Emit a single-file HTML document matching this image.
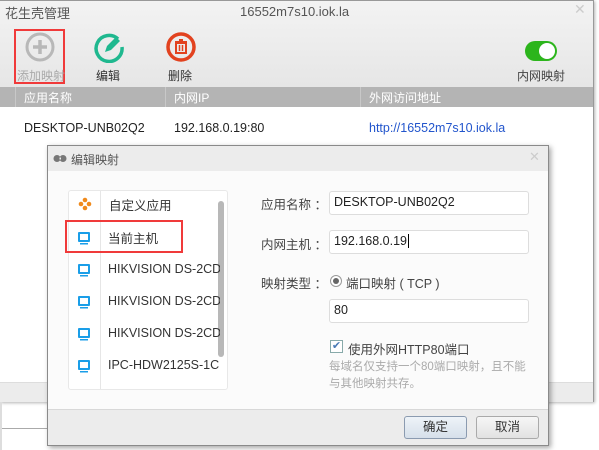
<!DOCTYPE html>
<html><head><meta charset="utf-8"><style>
*{margin:0;padding:0;box-sizing:border-box}
body{width:599px;height:450px;position:relative;overflow:hidden;background:#fff;font-family:"Liberation Sans","Noto Sans CJK SC",sans-serif;font-size:12px;color:#333}
.abs{position:absolute}
</style></head><body>
<div class="abs" style="left:0;top:0;width:594px;height:402px;background:#fff;border-right:1px solid #999;border-bottom:1px solid #999;box-shadow:1px 1px 3px rgba(0,0,0,.3)">
  <div class="abs" style="left:0;top:0;width:593px;height:87px;background:linear-gradient(#f3f3f3,#e6e6e6)"></div>
  <div class="abs" style="left:0;top:0;width:593px;height:1px;background:#999"></div>
  <div class="abs" style="left:5px;top:3px;font-size:13px;color:#555">花生壳管理</div>
  <div class="abs" style="left:240px;top:4px;font-size:13px;color:#555">16552m7s10.iok.la</div>
  <div class="abs" style="left:574px;top:1px;font-size:14px;color:#ccc">✕</div>
  <div class="abs" style="left:14px;top:29px;width:51px;height:55px;border:2px solid #f03a3a"></div>
  <svg class="abs" style="left:24px;top:31px" width="32" height="32"><circle cx="16" cy="16" r="13" fill="none" stroke="#b8b8b8" stroke-width="3"/><path d="M16 9v14M9 16h14" stroke="#b8b8b8" stroke-width="3.5"/></svg>
  <div class="abs" style="left:17px;top:67px;color:#aaa">添加映射</div>
  <svg class="abs" style="left:93px;top:31px" width="32" height="32"><path d="M25 8A13 13 0 1 0 29 16" fill="none" stroke="#1fb88f" stroke-width="3.5"/><path d="M12 21l2-6 9-9 4 4-9 9z" fill="#1fb88f"/></svg>
  <div class="abs" style="left:96px;top:67px;color:#333">编辑</div>
  <svg class="abs" style="left:165px;top:31px" width="32" height="32"><circle cx="16" cy="16" r="13" fill="none" stroke="#e2421f" stroke-width="3.5"/><path d="M10 11h12M14 9h4M11 12h10v10h-10z" fill="none" stroke="#e2421f" stroke-width="2"/><path d="M14.5 14v6M17.5 14v6" stroke="#e2421f" stroke-width="1.5"/></svg>
  <div class="abs" style="left:168px;top:67px;color:#333">删除</div>
  <div class="abs" style="left:525px;top:41px;width:32px;height:20px;border-radius:10px;background:#2cb51c"></div>
  <div class="abs" style="left:539px;top:43px;width:16px;height:16px;border-radius:50%;background:#fff"></div>
  <div class="abs" style="left:517px;top:67px;color:#444">内网映射</div>
  <div class="abs" style="left:0;top:87px;width:593px;height:20px;background:#b4b4b4"></div>
  <div class="abs" style="left:15px;top:87px;width:1px;height:20px;background:#c8c8c8"></div>
  <div class="abs" style="left:165px;top:87px;width:1px;height:20px;background:#c8c8c8"></div>
  <div class="abs" style="left:360px;top:87px;width:1px;height:20px;background:#c8c8c8"></div>
  <div class="abs" style="left:24px;top:89px;color:#fff">应用名称</div>
  <div class="abs" style="left:174px;top:89px;color:#fff">内网IP</div>
  <div class="abs" style="left:369px;top:89px;color:#fff">外网访问地址</div>
  <div class="abs" style="left:24px;top:121px;font-size:12.5px;color:#222">DESKTOP-UNB02Q2</div>
  <div class="abs" style="left:174px;top:121px;font-size:12.5px;color:#222">192.168.0.19:80</div>
  <div class="abs" style="left:369px;top:121px;font-size:12.5px;color:#2255cc">http://16552m7s10.iok.la</div>
  <div class="abs" style="left:0;top:382px;width:593px;height:20px;background:#ececec;border-top:1px solid #ddd"></div>
</div>
<div class="abs" style="left:0;top:428px;width:47px;height:1px;background:#aaa"></div>
<div class="abs" style="left:0;top:402px;width:2px;height:48px;background:#ddd"></div>
<div class="abs" style="left:47px;top:145px;width:502px;height:301px;background:#fbfbfb;border:1px solid #8a8a8a;box-shadow:2px 2px 5px rgba(0,0,0,.35)">
  <div class="abs" style="left:0;top:0;width:500px;height:25px;background:#ececec"></div>
  <svg class="abs" style="left:5px;top:8px" width="14" height="9"><circle cx="4" cy="4.5" r="3.5" fill="#777"/><circle cx="10" cy="4.5" r="3.5" fill="#777"/><rect x="6.5" y="3.5" width="1.5" height="2" fill="#eee"/></svg>
  <div class="abs" style="left:23px;top:5px;color:#555">编辑映射</div>
  <div class="abs" style="left:481px;top:3px;font-size:13px;color:#ccc">✕</div>
  <div class="abs" style="left:20px;top:44px;width:160px;height:200px;background:#fff;border:1px solid #e8e8e8;border-radius:3px;overflow:hidden">
    <div class="abs" style="left:31px;top:0;width:1px;height:200px;background:#e6e6e6"></div>
    <div class="abs" style="left:149px;top:10px;width:6px;height:156px;border-radius:3px;background:#b8b8b8"></div>
    <svg class="abs" style="left:9px;top:6px" width="14" height="14"><circle cx="7" cy="3" r="2.3" fill="#f08a1c"/><circle cx="3" cy="7" r="2.3" fill="#f08a1c"/><circle cx="11" cy="7" r="2.3" fill="#f08a1c"/><circle cx="7" cy="11" r="2.3" fill="#f08a1c"/></svg>
    <div class="abs" style="left:40px;top:4px;font-size:12.5px;color:#333">自定义应用</div>
  </div>
  <div class="abs" style="left:17px;top:74px;width:118px;height:33px;border:2px solid #f03a3a"></div>
  <div class="abs" style="left:60px;top:82px;font-size:12.5px;color:#333">当前主机</div>
  <div class="abs" style="left:60px;top:116px;font-size:12.5px;color:#333;width:112px;overflow:hidden;white-space:nowrap">HIKVISION DS-2CD</div>
  <div class="abs" style="left:60px;top:148px;font-size:12.5px;color:#333;width:112px;overflow:hidden;white-space:nowrap">HIKVISION DS-2CD</div>
  <div class="abs" style="left:60px;top:180px;font-size:12.5px;color:#333;width:112px;overflow:hidden;white-space:nowrap">HIKVISION DS-2CD</div>
  <div class="abs" style="left:60px;top:212px;font-size:12.5px;color:#333;width:112px;overflow:hidden;white-space:nowrap">IPC-HDW2125S-1C</div>
  <svg class="abs" style="left:30px;top:86px" width="12" height="150"><g fill="#1a9ee8">
    <rect x="0" y="0" width="12" height="10" rx="1"/><rect x="2" y="11" width="8" height="1.5"/>
    <rect x="0" y="32" width="12" height="10" rx="1"/><rect x="2" y="43" width="8" height="1.5"/>
    <rect x="0" y="64" width="12" height="10" rx="1"/><rect x="2" y="75" width="8" height="1.5"/>
    <rect x="0" y="96" width="12" height="10" rx="1"/><rect x="2" y="107" width="8" height="1.5"/>
    <rect x="0" y="128" width="12" height="10" rx="1"/><rect x="2" y="139" width="8" height="1.5"/></g>
    <g fill="#fff"><rect x="2" y="2" width="8" height="6"/><rect x="2" y="34" width="8" height="6"/><rect x="2" y="66" width="8" height="6"/><rect x="2" y="98" width="8" height="6"/><rect x="2" y="130" width="8" height="6"/></g></svg>
  <div class="abs" style="left:213px;top:48px;font-size:12.5px;color:#444">应用名称 ：</div>
  <div class="abs" style="left:281px;top:45px;width:200px;height:24px;background:#fff;border:1px solid #ddd;border-radius:3px;padding:3px 4px;font-size:12.5px;color:#222">DESKTOP-UNB02Q2</div>
  <div class="abs" style="left:213px;top:88px;font-size:12.5px;color:#444">内网主机 ：</div>
  <div class="abs" style="left:281px;top:84px;width:200px;height:24px;background:#fff;border:1px solid #ddd;border-radius:3px;padding:3px 4px;font-size:12.5px;color:#222">192.168.0.19<span style="border-left:1px solid #000;margin-left:1px"></span></div>
  <div class="abs" style="left:213px;top:127px;font-size:12.5px;color:#444">映射类型 ：</div>
  <div class="abs" style="left:282px;top:129px;width:12px;height:12px;border-radius:50%;border:1px solid #999;background:#fff"></div>
  <div class="abs" style="left:285px;top:132px;width:6px;height:6px;border-radius:50%;background:#666"></div>
  <div class="abs" style="left:298px;top:127px;font-size:12.5px;color:#444">端口映射 ( TCP )</div>
  <div class="abs" style="left:281px;top:153px;width:200px;height:24px;background:#fff;border:1px solid #ddd;border-radius:3px;padding:3px 4px;font-size:12.5px;color:#222">80</div>
  <div class="abs" style="left:282px;top:194px;width:13px;height:13px;border:1px solid #8aa;background:#fff;color:#4a7ab5;font-size:11px;line-height:11px;text-align:center">✔</div>
  <div class="abs" style="left:300px;top:193px;font-size:12.5px;color:#444">使用外网HTTP80端口</div>
  <div class="abs" style="left:281px;top:213px;width:198px;font-size:11.5px;line-height:17px;color:#aaa">每域名仅支持一个80端口映射，且不能与其他映射共存。</div>
  <div class="abs" style="left:0;top:263px;width:500px;height:36px;background:#ececec;border-top:1px solid #d8d8d8"></div>
  <div class="abs" style="left:356px;top:270px;width:63px;height:23px;border:1px solid #8b9bb0;border-radius:3px;background:linear-gradient(#eef3f8,#d6e0ea);text-align:center;line-height:21px;font-size:12.5px;color:#333">确定</div>
  <div class="abs" style="left:428px;top:270px;width:63px;height:23px;border:1px solid #aaa;border-radius:3px;background:linear-gradient(#f6f6f6,#e2e2e2);text-align:center;line-height:21px;font-size:12.5px;color:#333">取消</div>
</div>
</body></html>
